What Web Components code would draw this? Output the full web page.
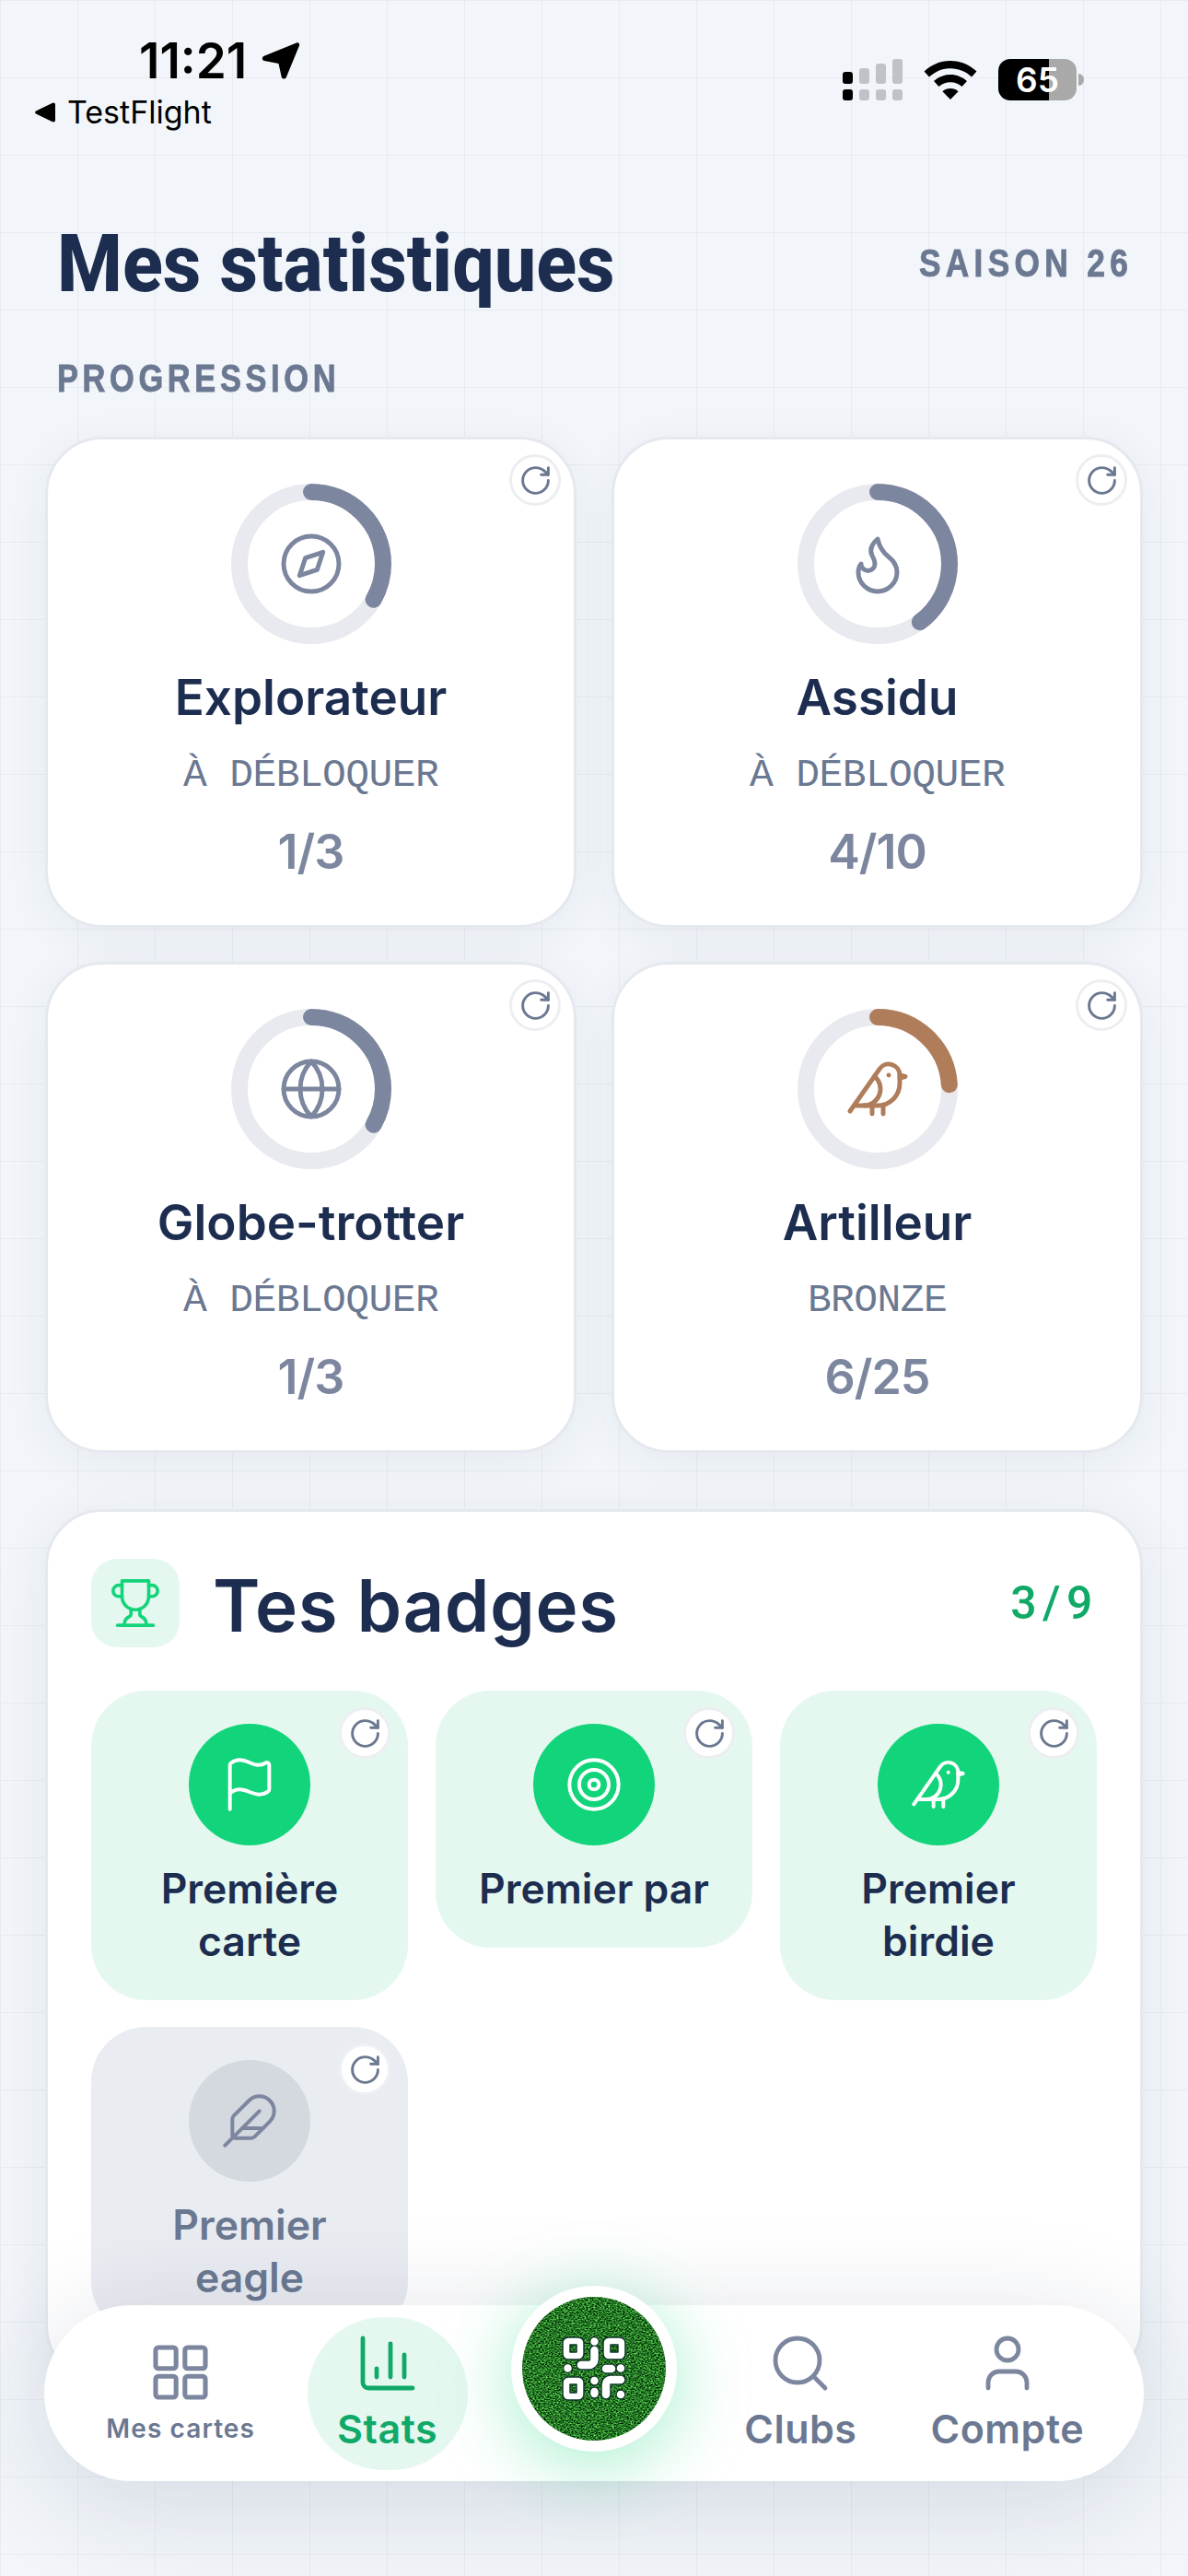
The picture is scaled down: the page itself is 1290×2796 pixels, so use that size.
<!DOCTYPE html>
<html lang="fr">
<head>
<meta charset="utf-8">
<title>Mes statistiques</title>
<style>
  html, body { margin: 0; padding: 0; }
  body {
    width: 1290px;
    height: 2796px;
    overflow: hidden;
    font-family: 'Inter', 'Liberation Sans', sans-serif;
    background-color: #f2f6fa;
    background-image:
      linear-gradient(#e8ecf1 1.5px, transparent 1.5px),
      linear-gradient(90deg, #e8ecf1 1.5px, transparent 1.5px);
    background-size: 84px 84px;
  }
</style>
</head>
<body>
<stats-app>
  <status-bar slot="status"></status-bar>
  <page-header slot="header" season="SAISON 26">Mes statistiques</page-header>

  <section-label>PROGRESSION</section-label>
  <card-grid>
    <achievement-card icon="compass" progress="33.3" subtitle="À DÉBLOQUER" count="1/3">Explorateur</achievement-card>
    <achievement-card icon="flame" progress="40" subtitle="À DÉBLOQUER" count="4/10">Assidu</achievement-card>
    <achievement-card icon="globe" progress="33.3" subtitle="À DÉBLOQUER" count="1/3">Globe-trotter</achievement-card>
    <achievement-card icon="bird" progress="24" color="#b07d5a" subtitle="BRONZE" count="6/25">Artilleur</achievement-card>
  </card-grid>

  <badges-panel count="3/9" heading="Tes badges">
    <badge-tile icon="flag">Première carte</badge-tile>
    <badge-tile icon="target">Premier par</badge-tile>
    <badge-tile icon="bird">Premier birdie</badge-tile>
    <badge-tile icon="feather" muted>Premier eagle</badge-tile>
  </badges-panel>

  <tab-bar slot="nav">
    <tab-item icon="grid" small>Mes cartes</tab-item>
    <tab-item icon="chart" active>Stats</tab-item>
    <scan-button></scan-button>
    <tab-item icon="search">Clubs</tab-item>
    <tab-item icon="user">Compte</tab-item>
  </tab-bar>
</stats-app>

<script>
const ICONS = {
  compass: '<circle cx="12" cy="12" r="10"/><path d="m16.24 7.76-2.12 6.36-6.36 2.12 2.12-6.36z"/>',
  flame: '<path d="M8.5 14.5A2.5 2.5 0 0 0 11 12c0-1.38-.5-2-1-3-1.072-2.143-.224-4.054 2-6 .5 2.5 2 4.9 4 6.5 2 1.6 3 3.5 3 5.5a7 7 0 1 1-14 0c0-1.153.433-2.294 1-3a2.5 2.5 0 0 0 2.5 2.5z"/>',
  globe: '<circle cx="12" cy="12" r="10"/><path d="M12 2a14.5 14.5 0 0 0 0 20 14.5 14.5 0 0 0 0-20"/><path d="M2 12h20"/>',
  bird: '<path d="M16 7h.01"/><path d="M3.4 18H12a8 8 0 0 0 8-8V7a4 4 0 0 0-7.28-2.3L2 20"/><path d="m20 7 2 .5-2 .5"/><path d="M10 18v3"/><path d="M14 17.75V21"/><path d="M7 18a6 6 0 0 0 3.84-10.61"/>',
  flag: '<path d="M4 22V4a1 1 0 0 1 .4-.8A6 6 0 0 1 8 2c3 0 5 2 7.333 2q2 0 3.067-.8A1 1 0 0 1 20 4v10a1 1 0 0 1-.4.8A6 6 0 0 1 16 16c-3 0-5-2-8-2a6 6 0 0 0-4 1.528"/>',
  target: '<circle cx="12" cy="12" r="10"/><circle cx="12" cy="12" r="6"/><circle cx="12" cy="12" r="2"/>',
  feather: '<path d="M12.67 19a2 2 0 0 0 1.416-.588l6.154-6.172a6 6 0 0 0-8.49-8.49L5.586 9.914A2 2 0 0 0 5 11.328V18a1 1 0 0 0 1 1z"/><path d="M16 8 2 22"/><path d="M17.5 15H9"/>',
  trophy: '<path d="M6 9H4.5a2.5 2.5 0 0 1 0-5H6"/><path d="M18 9h1.5a2.5 2.5 0 0 0 0-5H18"/><path d="M4 22h16"/><path d="M10 14.66V17c0 .55-.47.98-.97 1.21C7.85 18.75 7 20.24 7 22"/><path d="M14 14.66V17c0 .55.47.98.97 1.21C16.15 18.75 17 20.24 17 22"/><path d="M18 2H6v7a6 6 0 0 0 12 0V2Z"/>',
  refresh: '<path d="M21 12a9 9 0 1 1-9-9c2.52 0 4.93 1 6.74 2.74L21 8"/><path d="M21 3v5h-5"/>',
  grid: '<rect x="3" y="3" width="7.4" height="7.6" rx="1"/><rect x="13.6" y="3" width="7.4" height="7.6" rx="1"/><rect x="3" y="13.4" width="7.4" height="7.6" rx="1"/><rect x="13.6" y="13.4" width="7.4" height="7.6" rx="1"/>',
  chart: '<path d="M3 3v16a2 2 0 0 0 2 2h16"/><path d="M18 17V9"/><path d="M13 17V5"/><path d="M8 17v-3"/>',
  search: '<circle cx="11" cy="11" r="8"/><path d="m21 21-4.3-4.3"/>',
  user: '<path d="M19 21v-2a4 4 0 0 0-4-4H9a4 4 0 0 0-4 4v2"/><circle cx="12" cy="7" r="4"/>'
};

function define(name, css, html, setup) {
  customElements.define(name, class extends HTMLElement {
    connectedCallback() {
      if (this.shadowRoot) return;
      const root = this.attachShadow({ mode: 'open' });
      const view = typeof html === 'function' ? html(this) : html;
      root.innerHTML = `<style>${css}</style>${view}`;
      if (setup) setup(root, this);
    }
  });
}

define('app-icon', `
  :host { display: block; line-height: 0; }
  svg { display: block; fill: none; stroke: currentColor; stroke-linecap: round; stroke-linejoin: round; }
`, el => {
  const size = el.getAttribute('size') || 72;
  const weight = el.getAttribute('weight') || 1.5;
  return `<svg width="${size}" height="${size}" viewBox="0 0 24 24" stroke-width="${weight}">${ICONS[el.getAttribute('name')]}</svg>`;
});

define('stats-app', `
  :host { display: flex; flex-direction: column; position: relative; width: 1290px; height: 2796px; overflow: hidden; }
  .scroller { flex: 1; min-height: 0; overflow: hidden; padding: 0 49px; }
`, `
  <slot name="status"></slot>
  <slot name="header"></slot>
  <main class="scroller"><slot></slot></main>
  <slot name="nav"></slot>
`);

define('status-bar', `
  :host { display: flex; justify-content: space-between; height: 190px; color: #000; font-family: 'Inter', sans-serif; }
  .left { padding: 36px 0 0 38px; }
  .time { display: flex; align-items: center; gap: 16px; padding-left: 113px; height: 60px; font-size: 53px; font-weight: 600; letter-spacing: 0; line-height: 60px; }
  .back { display: flex; align-items: center; gap: 13px; margin-top: 6px; font-size: 34px; line-height: 40px; font-weight: 400; }
  .right { display: flex; align-items: center; gap: 23px; height: 45px; margin-top: 64px; padding-right: 113px; }
  .battery { display: flex; align-items: center; gap: 2px; }
  .cell {
    position: relative; width: 85px; height: 45px; border-radius: 13px; overflow: hidden;
    background: linear-gradient(90deg, #000 0 55px, #a9a9a9 55px);
    color: #fff; font-size: 37px; font-weight: 600; line-height: 45px; text-align: center;
  }
  .nub { width: 6px; height: 13px; border-radius: 0 6px 6px 0; background: #a9a9a9; }
`, `
  <div class="left">
    <div class="time">11:21
      <svg width="42" height="42" viewBox="0 0 42 42"><path fill="#000" d="M38 1.5c2-.7 3.700 1 3 3L27 38.500c-.9 2.800-4.600 2.800-5.300 0L18.500 24 3 21c-2.800-.7-2.900-4.300-.2-5.300z"/></svg>
    </div>
    <div class="back">
      <svg width="22" height="22" viewBox="0 0 22 22"><path fill="#000" d="M20 .5c1 0 2 .8 2 2v17c0 1.200-1 2-2 2-.5 0-1-.2-1.500-.5L1 12.500c-1.300-.7-1.300-2.300 0-3L18.500 1c.5-.3 1-.5 1.500-.5z"/></svg>
      <span>TestFlight</span>
    </div>
  </div>
  <div class="right">
    <svg width="65" height="45" viewBox="0 0 65 45">
      <g fill="#000"><rect x="0" y="14" width="11" height="13" rx="3"/><rect x="0" y="33" width="11" height="12" rx="3"/></g>
      <g fill="#c0c2c7">
        <rect x="18" y="10" width="11" height="17" rx="3"/><rect x="18" y="33" width="11" height="12" rx="3"/>
        <rect x="36" y="5" width="11" height="22" rx="3"/><rect x="36" y="33" width="11" height="12" rx="3"/>
        <rect x="54" y="0" width="11" height="27" rx="3"/><rect x="54" y="33" width="11" height="12" rx="3"/>
      </g>
    </svg>
    <svg width="58" height="42" viewBox="0 0 58 42">
      <path fill="#000" d="M29 0c11 0 21 4.300 28.500 11.500l-5.500 6C46 11.800 37.900 8.300 29 8.300S12 11.800 6 17.500L.5 11.500C8 4.300 18 0 29 0z"/>
      <path fill="#000" d="M29 15c6.900 0 13.200 2.700 18 7l-5.500 6c-3.300-3-7.700-4.800-12.500-4.800S19.800 25 16.500 28L11 22c4.800-4.300 11.100-7 18-7z"/>
      <path fill="#000" d="M29 30c3.300 0 6.300 1.200 8.600 3.200L29 42l-8.600-8.800C22.700 31.200 25.700 30 29 30z"/>
    </svg>
    <div class="battery"><div class="cell">65</div><div class="nub"></div></div>
  </div>
`);

define('page-header', `
  :host { display: flex; justify-content: space-between; align-items: center; height: 177px; padding: 14px 60px 0 62px; box-sizing: border-box; }
  h1 { margin: 0; color: #1c2d50; font-family: 'Roboto', 'Liberation Sans', sans-serif; font-size: 87px; font-weight: 800; line-height: 100px; white-space: nowrap; transform: scaleX(.93); transform-origin: left center; }
  .season { color: #6b7891; font-family: 'Liberation Sans', sans-serif; font-size: 43px; font-weight: 700; letter-spacing: 6.500px; white-space: nowrap; -webkit-text-stroke: .9px #6b7891; transform: scaleX(.82); transform-origin: right center; }
`, el => `<h1><slot></slot></h1><div class="season">${el.getAttribute('season')}</div>`);

define('section-label', `
  :host { display: block; margin: 18px 0 39px 13px; color: #6b7891; font-family: 'Liberation Sans', sans-serif; font-size: 43px; font-weight: 700; line-height: 50px; letter-spacing: 5.800px; -webkit-text-stroke: .9px #6b7891; transform: scaleX(.8); transform-origin: left center; }
`, '<slot></slot>');

define('card-grid', `
  :host { display: grid; grid-template-columns: 577px 577px; gap: 37px 38px; }
`, '<slot></slot>');

define('refresh-button', `
  :host {
    position: absolute; top: var(--top, 16px); right: var(--right, 14px);
    display: flex; align-items: center; justify-content: center;
    width: 56px; height: 56px; box-sizing: border-box;
    border: 3px solid var(--ring, #eceef2); border-radius: 50%; background: #fff; color: #6b7891;
  }
`, '<app-icon name="refresh" size="37" weight="1.9"></app-icon>');

define('achievement-card', `
  :host {
    display: flex; flex-direction: column; align-items: center; position: relative;
    height: 533px; box-sizing: border-box; padding-top: 48px;
    border: 3px solid #e5e8ee; border-radius: 62px; background: #fff;
    box-shadow: 0 10px 50px rgba(27, 43, 80, .06);
  }
  .ring { position: relative; width: 174px; height: 174px; flex: none; display: flex; align-items: center; justify-content: center; }
  .ring svg.track { position: absolute; inset: 0; transform: rotate(-90deg); }
  h2 { margin: 26px 0 0; color: #1c2d50; font-size: 53px; font-weight: 600; line-height: 64px; }
  .sub { margin-top: 29px; color: #6b7891; font-family: 'Liberation Mono', monospace; font-size: 43px; line-height: 48px; letter-spacing: -.600px; }
  .count { margin-top: 29px; color: #7c869e; font-size: 52px; font-weight: 600; line-height: 60px; letter-spacing: -1px; }
`, el => {
  const color = el.getAttribute('color') || '#7c869e';
  return `
    <refresh-button></refresh-button>
    <div class="ring">
      <svg class="track" width="174" height="174" viewBox="0 0 174 174" fill="none" stroke-width="18">
        <circle cx="87" cy="87" r="78" stroke="#e8eaef"/>
        <circle cx="87" cy="87" r="78" stroke="${color}" stroke-linecap="round" pathLength="100" stroke-dasharray="${el.getAttribute('progress')} 100"/>
      </svg>
      <app-icon name="${el.getAttribute('icon')}" weight="1.65" style="color:${color}"></app-icon>
    </div>
    <h2><slot></slot></h2>
    <div class="sub">${el.getAttribute('subtitle')}</div>
    <div class="count">${el.getAttribute('count')}</div>
  `;
});

define('badges-panel', `
  :host {
    display: block; margin-top: 61px; padding: 51px 47px 47px; box-sizing: border-box;
    border: 3px solid #e5e8ee; border-radius: 62px; background: #fff;
    box-shadow: 0 10px 60px rgba(27, 43, 80, .07);
  }
  header { display: flex; align-items: center; gap: 36px; height: 96px; margin-bottom: 47px; }
  .badge-icon { width: 96px; height: 96px; border-radius: 28px; background: #e5f8f0; color: #12d47a; display: flex; align-items: center; justify-content: center; flex: none; }
  h2 { flex: 1; margin: 5px 0 0; color: #1c2d50; font-size: 78px; font-weight: 600; line-height: 96px; letter-spacing: .6px; }
  .count { margin: 0 -2px 0 0; color: #10a968; font-family: 'Roboto', sans-serif; font-size: 50px; font-weight: 500; letter-spacing: 6.500px; }
  .tiles { display: grid; grid-template-columns: repeat(3, 344px); gap: 29px 30px; align-items: start; }
`, el => `
  <header>
    <div class="badge-icon"><app-icon name="trophy" size="58"></app-icon></div>
    <h2>${el.getAttribute('heading')}</h2>
    <div class="count">${el.getAttribute('count')}</div>
  </header>
  <div class="tiles"><slot></slot></div>
`);

define('badge-tile', `
  :host {
    display: flex; flex-direction: column; align-items: center; position: relative;
    padding: 36px 30px 35px; box-sizing: border-box; border-radius: 60px;
    background: var(--tile, #e5f8f0);
    --top: 18px; --right: 19px;
  }
  :host([muted]) { --tile: #e9ecf1; --disc: #d4d8df; --ink: #6b7891; --glyph: #7c869e; --ring: #eef0f4; }
  .disc { width: 132px; height: 132px; flex: none; border-radius: 50%; background: var(--disc, #12d47a); color: var(--glyph, #fff); display: flex; align-items: center; justify-content: center; }
  p { margin: 19px 0 0; color: var(--ink, #1c2d50); font-size: 44.500px; font-weight: 600; line-height: 57px; text-align: center; }
`, el => `
  <refresh-button></refresh-button>
  <div class="disc"><app-icon name="${el.getAttribute('icon')}" size="64"></app-icon></div>
  <p><slot></slot></p>
`);

define('tab-bar', `
  :host {
    position: absolute; left: 48px; bottom: 103px; width: 1194px; height: 191px;
    display: grid; grid-template-columns: repeat(5, 1fr); grid-template-rows: 191px; align-items: center; justify-items: center;
    padding: 0 36px; box-sizing: border-box; border-radius: 96px; background: #fff;
    box-shadow: 0 20px 120px rgba(27, 43, 80, .15);
  }
`, '<slot></slot>');

define('tab-item', `
  :host { display: flex; flex-direction: column; align-items: center; justify-content: center; width: 174px; height: 166px; padding-bottom: 4px; box-sizing: border-box; border-radius: 83px; color: #6b7891; white-space: nowrap; }
  :host([active]) { background: #e5f8f0; color: #10a968; }
  app-icon { color: #7c869e; }
  :host([active]) app-icon { color: #10a968; }
  span { display: block; margin-top: 10px; font-size: 43px; font-weight: 600; line-height: 51px; letter-spacing: .5px; }
  :host([small]) span { margin-top: 8px; font-size: 28px; font-weight: 600; line-height: 34px; letter-spacing: 1.100px; }
`, el => `
  <app-icon name="${el.getAttribute('icon')}" weight="${el.hasAttribute('small') ? 1.7 : 1.6}"></app-icon>
  <span><slot></slot></span>
`);

define('scan-button', `
  :host {
    display: block; position: relative; z-index: 1; width: 180px; height: 180px; margin-bottom: 54px;
    border-radius: 50%; background: #fff; box-sizing: border-box; padding: 12px;
    box-shadow: 0 14px 80px rgba(18, 212, 122, .38);
  }
  svg { display: block; border-radius: 50%; }
`, `
  <svg width="156" height="156" viewBox="0 0 156 156">
    <defs>
      <filter id="grass" x="0" y="0" width="100%" height="100%" color-interpolation-filters="sRGB">
        <feTurbulence type="fractalNoise" baseFrequency="0.5 0.7" numOctaves="3" seed="7"/>
        <feColorMatrix values="0.9 0 0 0 -0.3  1.5 0 0 0 -0.28  0.7 0 0 0 -0.2  0 0 0 0 1"/>
      </filter>
    </defs>
    <rect width="156" height="156" fill="#1f7a2a" filter="url(#grass)"/>
    <g transform="translate(44 44)" fill="none" stroke-linecap="round" stroke-linejoin="round">
      <g stroke="#10352a" stroke-width="11">
        <path d="M34.500 4.500h0M34.500 14v10a6 6 0 0 1-6 6H20M5.500 33.500h0M47 34h6M63 33.500h0M34.500 47h0M34.500 59v2M47 62V51a5 5 0 0 1 5-5h11M63 62h0"/>
      </g>
      <g fill="#fff" stroke="#10352a" stroke-width="1.500">
        <path fill-rule="evenodd" d="M6 0h11a6 6 0 0 1 6 6v12a6 6 0 0 1-6 6H6a6 6 0 0 1-6-6V6a6 6 0 0 1 6-6zM8 8v8h7V8z"/>
        <path fill-rule="evenodd" d="M50 0h12a6 6 0 0 1 6 6v12a6 6 0 0 1-6 6H50a6 6 0 0 1-6-6V6a6 6 0 0 1 6-6zM52 8v8h8V8z"/>
        <path fill-rule="evenodd" d="M6 43h11a6 6 0 0 1 6 6v13a6 6 0 0 1-6 6H6a6 6 0 0 1-6-6V49a6 6 0 0 1 6-6zM8 51v9h7v-9z"/>
      </g>
      <g stroke="#fff" stroke-width="8.500">
        <path d="M34.500 4.500h0M34.500 14v10a6 6 0 0 1-6 6H20M5.500 33.500h0M47 34h6M63 33.500h0M34.500 47h0M34.500 59v2M47 62V51a5 5 0 0 1 5-5h11M63 62h0"/>
      </g>
    </g>
  </svg>
`);
</script>
</body>
</html>
